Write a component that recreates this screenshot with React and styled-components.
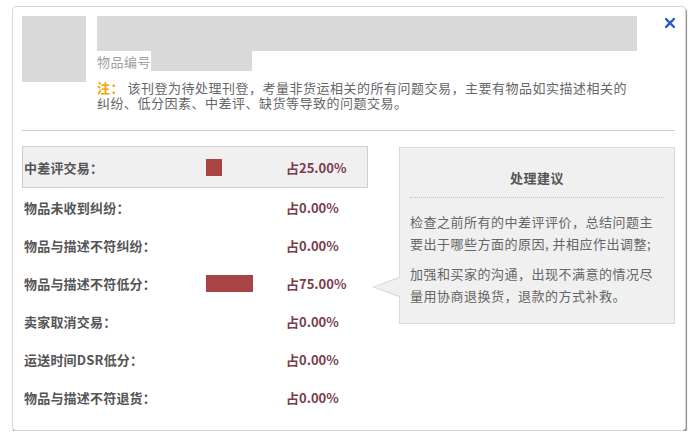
import React from 'react'
import styled, { createGlobalStyle } from 'styled-components'

const GlobalStyle = createGlobalStyle`
  html, body {
    margin: 0;
    padding: 0;
    background: #fff;
  }
  body {
    font-family: "Noto Sans CJK SC", "Noto Sans", sans-serif;
  }
`

const Modal = styled.div`
  box-sizing: border-box;
  width: 674px;
  height: 425px;
  margin: 6px 0 0 12px;
  padding: 9px 10px 0 9px;
  background: #fff;
  border: 1px solid #d6d6d6;
  border-radius: 4px;
  box-shadow: 1px 2px 1px rgba(0, 0, 0, 0.45);
`

const Header = styled.div`
  display: flex;
  align-items: flex-start;
`

const Thumb = styled.div`
  width: 64px;
  height: 66px;
  background: #d9d9d9;
  flex-shrink: 0;
`

const Info = styled.div`
  width: 540px;
  margin-left: 11px;
`

const TitleBar = styled.div`
  height: 35px;
  background: #d9d9d9;
`

const ItemNo = styled.div`
  display: flex;
  align-items: flex-end;
  height: 20px;
  font-size: 13px;
  letter-spacing: 0.5px;
  color: #a0a0a0;
  line-height: 18px;
`

const ItemNoBox = styled.span`
  display: block;
  width: 101px;
  height: 20px;
  background: #d9d9d9;
  margin-left: 0;
`

const Note = styled.p`
  margin: 9px 0 0;
  font-size: 13px;
  letter-spacing: 0.5px;
  line-height: 15px;
  color: #666;
`

const NoteTag = styled.b`
  color: #f5a200;
  font-weight: 700;
`

const Close = styled.button`
  margin: 2px 0 0 auto;
  padding: 0;
  width: 10px;
  height: 10px;
  border: 0;
  background: none;
  display: flex;
  cursor: pointer;
`

const Divider = styled.div`
  margin-top: 20px;
  border-top: 1px solid #cfcfcf;
`

const Body = styled.div`
  display: flex;
  align-items: flex-start;
  margin-top: 15px;
`

const List = styled.div`
  width: 346px;
  flex-shrink: 0;
`

const Row = styled.div`
  box-sizing: border-box;
  display: grid;
  grid-template-columns: 182px 80px 1fr;
  align-items: center;
  height: ${(p) => (p.$active ? '42px' : '38px')};
  padding-left: 1px;
  border: 1px solid ${(p) => (p.$active ? '#cfcfcf' : 'transparent')};
  background: ${(p) => (p.$active ? '#f0f0f0' : 'transparent')};
`

const Label = styled.span`
  font-size: 13px;
  font-weight: 700;
  letter-spacing: 0.2px;
  color: #555;
`

const BarTrack = styled.div`
  width: 63px;
  height: 17px;
  display: flex;
`

const Bar = styled.div`
  height: 100%;
  background: #a94444;
`

const Percent = styled.span`
  font-size: 13px;
  font-weight: 700;
  color: #7d3c4c;
`

const Advice = styled.div`
  position: relative;
  box-sizing: border-box;
  width: 276px;
  margin-left: 31px;
  margin-top: 1px;
  padding: 20px 10px 17px;
  background: #f0f0f0;
  border: 1px solid #dadada;

  &::before,
  &::after {
    content: '';
    position: absolute;
    top: 129px;
    width: 0;
    height: 0;
    border-style: solid;
  }
  &::before {
    left: -28px;
    border-width: 10px 27px 10px 0;
    border-color: transparent #d6d6d6 transparent transparent;
  }
  &::after {
    left: -26px;
    top: 130px;
    border-width: 9px 26px 9px 0;
    border-color: transparent #f0f0f0 transparent transparent;
  }
`

const AdviceTitle = styled.h3`
  margin: 0;
  text-align: center;
  font-size: 13px;
  font-weight: 700;
  line-height: 20px;
  letter-spacing: 0.5px;
  color: #555;
`

const DottedRule = styled.div`
  margin-top: 9px;
  border-top: 1px dotted #c4c4c4;
`

const AdviceText = styled.p`
  width: 250px;
  margin: ${(p) => (p.$first ? '13px' : '9px')} 0 0;
  font-size: 13px;
  letter-spacing: 0.5px;
  line-height: 21.5px;
  color: #666;
`

const rows = [
  { label: '中差评交易：', value: 25 },
  { label: '物品未收到纠纷：', value: 0 },
  { label: '物品与描述不符纠纷：', value: 0 },
  { label: '物品与描述不符低分：', value: 75 },
  { label: '卖家取消交易：', value: 0 },
  { label: '运送时间DSR低分：', value: 0 },
  { label: '物品与描述不符退货：', value: 0 },
]

const App = () => {
  return (
    <>
      <GlobalStyle />
      <Modal>
        <Header>
          <Thumb />
          <Info>
            <TitleBar />
            <ItemNo>
              物品编号
              <ItemNoBox />
            </ItemNo>
            <Note>
              <NoteTag>注：</NoteTag> 该刊登为待处理刊登，考量非货运相关的所有问题交易，主要有物品如实描述相关的纠纷、低分因素、中差评、缺货等导致的问题交易。
            </Note>
          </Info>
          <Close aria-label="关闭">
            <svg width="10" height="10" viewBox="0 0 10 10">
              <path d="M1 1 L9 9 M9 1 L1 9" stroke="#2a5cbf" strokeWidth="2.4" strokeLinecap="square" />
            </svg>
          </Close>
        </Header>
        <Divider />
        <Body>
          <List>
            {rows.map((r, i) => (
              <Row key={r.label} $active={i === 0}>
                <Label>{r.label}</Label>
                <BarTrack>
                  {r.value > 0 && <Bar style={{ width: `${r.value}%` }} />}
                </BarTrack>
                <Percent>占{r.value.toFixed(2)}%</Percent>
              </Row>
            ))}
          </List>
          <Advice>
            <AdviceTitle>处理建议</AdviceTitle>
            <DottedRule />
            <AdviceText $first>
              检查之前所有的中差评评价，总结问题主要出于哪些方面的原因, 并相应作出调整;
            </AdviceText>
            <AdviceText>
              加强和买家的沟通，出现不满意的情况尽量用协商退换货，退款的方式补救。
            </AdviceText>
          </Advice>
        </Body>
      </Modal>
    </>
  )
}

export default App
